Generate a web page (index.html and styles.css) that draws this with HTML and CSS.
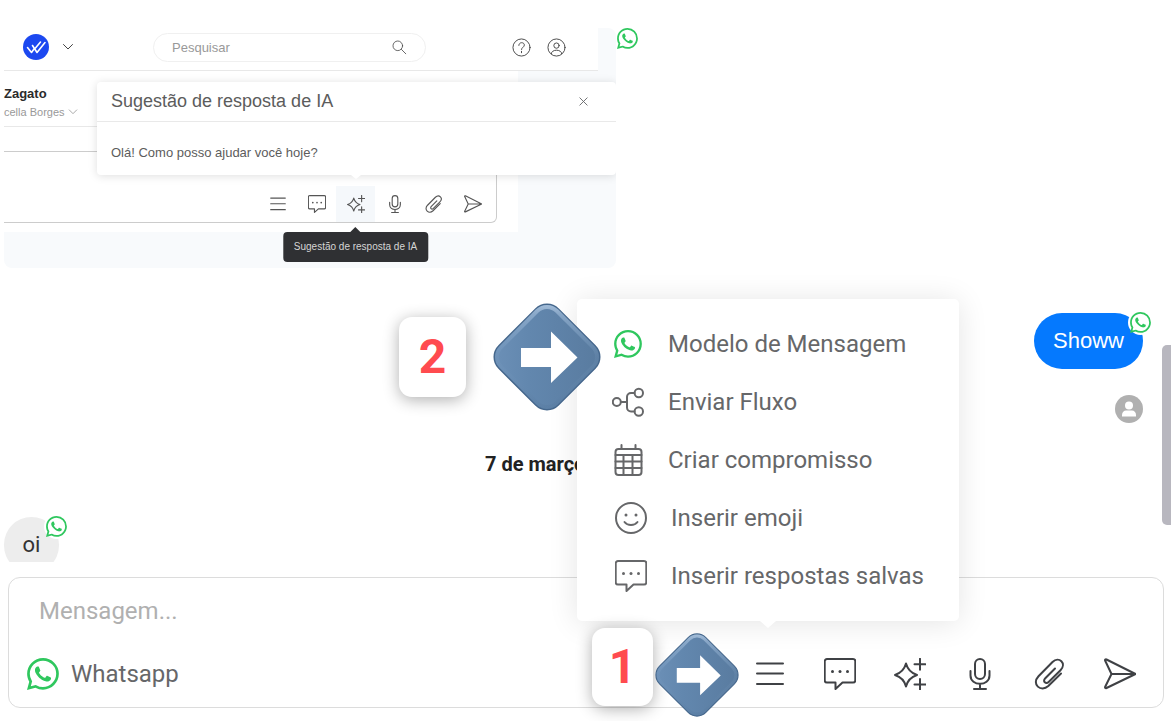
FILE: index.html
```html
<!DOCTYPE html>
<html lang="pt-BR">
<head>
<meta charset="utf-8">
<title>Conversa</title>
<meta name="viewport" content="width=device-width, initial-scale=1">
<link rel="stylesheet" href="styles.css">
</head>
<body>
<svg class="sprite" aria-hidden="true">
  <symbol id="i-whatsapp" viewBox="0 0 16 16"><path fill="currentColor" d="M13.601 2.326A7.854 7.854 0 0 0 7.994 0C3.627 0 .068 3.558.064 7.926c0 1.399.366 2.76 1.057 3.965L0 16l4.204-1.102a7.933 7.933 0 0 0 3.79.965h.004c4.368 0 7.926-3.558 7.93-7.93A7.898 7.898 0 0 0 13.6 2.326zM7.994 14.521a6.573 6.573 0 0 1-3.356-.92l-.24-.144-2.494.654.666-2.433-.156-.251a6.56 6.56 0 0 1-1.007-3.505c0-3.626 2.957-6.584 6.591-6.584a6.56 6.56 0 0 1 4.66 1.931 6.557 6.557 0 0 1 1.928 4.66c-.004 3.639-2.961 6.592-6.592 6.592zm3.615-4.934c-.197-.099-1.17-.578-1.353-.646-.182-.065-.315-.099-.445.099-.133.197-.513.646-.627.775-.114.133-.232.148-.43.05-.197-.1-.836-.308-1.592-.985-.59-.525-.985-1.175-1.103-1.372-.114-.198-.011-.304.088-.403.087-.088.197-.232.296-.346.1-.114.133-.198.198-.33.065-.134.034-.248-.015-.347-.05-.099-.445-1.076-.612-1.47-.16-.389-.323-.335-.445-.34-.114-.007-.247-.007-.38-.007a.729.729 0 0 0-.529.247c-.182.198-.691.677-.691 1.654 0 .977.71 1.916.81 2.049.098.133 1.394 2.132 3.383 2.992.47.205.84.326 1.129.418.475.152.904.129 1.246.08.38-.058 1.171-.48 1.338-.943.164-.464.164-.86.114-.943-.049-.084-.182-.133-.38-.232z"/></symbol>
  <symbol id="i-menu" viewBox="0 0 32 32"><path d="M3 5.500h26M3 15.500h26M3 26h26"/></symbol>
  <symbol id="i-bubble" viewBox="0 0 32 32"><path d="M3 1h26a2.300 2.300 0 0 1 2.300 2.300v19a2.300 2.300 0 0 1-2.300 2.300H18.500L11.500 31v-6.400H3a2.300 2.300 0 0 1-2.300-2.300v-19A2.300 2.300 0 0 1 3 1z"/><g class="dots"><circle cx="8.500" cy="13.500" r="1.500"/><circle cx="16" cy="13.500" r="1.500"/><circle cx="23.500" cy="13.500" r="1.500"/></g></symbol>
  <symbol id="i-spark" viewBox="0 0 32 32"><path d="M12 5.500C13.500 11 17 15 23 17c-6 2-9.500 5.500-11 11.500C10.500 22.500 7 19 1 17c6-2 9.500-6 11-11.500zM26 .8v11M20.500 6.300h11M26 21v11M20.500 26.500h11"/></symbol>
  <symbol id="i-mic" viewBox="0 0 32 32"><rect x="11" y="1" width="10" height="20" rx="5"/><path d="M6.500 13v4.500c0 11 19 11 19 0V13M16 26v5M10 31h12"/></symbol>
  <symbol id="i-clip" viewBox="0 0 32 32"><path d="M21 10.500 11.300 20.200c-3.200 3.200.6 6.500 3.600 3.600L26.500 12.200C33 5.500 25 -2 18.500 4L4.500 18.200c-7.500 8 2.500 16.500 9.800 9.800L27 15.500"/></symbol>
  <symbol id="i-send" viewBox="0 0 32 32"><path d="M1.200 2.800c-.5-1.100.3-1.700 1.300-1.300L31.500 16 2.500 30c-1 .4-1.800-.2-1.300-1.300L7.500 16zM7.500 16h24"/></symbol>
  <symbol id="i-flow" viewBox="0 0 32 32"><circle cx="4.800" cy="16" r="4"/><circle cx="26.800" cy="7" r="4.200"/><circle cx="26.800" cy="25.500" r="4.200"/><path d="M9 16h6M22.500 7H19a4 4 0 0 0-4 4v10.500a4 4 0 0 0 4 4h3.500"/></symbol>
  <symbol id="i-calendar" viewBox="0 0 32 32"><rect x="3.500" y="5" width="26" height="26" rx="3"/><path d="M3.500 11h26M3.500 17.500h26M3.500 24h26M11.500 11v20M20.500 11v20M9.500 1v4M23.500 1v4"/></symbol>
  <symbol id="i-smile" viewBox="0 0 32 32"><circle cx="16" cy="16" r="15"/><path d="M9.500 20c3 4 10 4 13 0"/><g class="dots"><circle cx="11" cy="13" r="1.500"/><circle cx="21" cy="13" r="1.500"/></g></symbol>
  <symbol id="i-chevron" viewBox="0 0 12 12"><path d="M1.500 3.500 6 8l4.500-4.500"/></symbol>
  <symbol id="i-search" viewBox="0 0 20 20"><circle cx="8.500" cy="8.500" r="6"/><path d="m13 13 5.500 5.500"/></symbol>
  <symbol id="i-help" viewBox="0 0 20 20"><circle cx="10" cy="10" r="9"/><path d="M7.200 7.800c0-4 5.800-3.600 5.800-.4 0 2.200-3 2.400-3 4.700M10 14v1.500"/></symbol>
  <symbol id="i-user" viewBox="0 0 20 20"><circle cx="10" cy="10" r="9"/><circle cx="10" cy="8" r="2.800"/><path d="M4.500 16.500c0-5 11-5 11 0"/></symbol>
  <symbol id="i-close" viewBox="0 0 12 12"><path d="m2 2 8 8M10 2l-8 8"/></symbol>
  <symbol id="i-arrow" viewBox="0 0 108 108">
    <rect x="12" y="12" width="84" height="84" rx="16" transform="rotate(45 54 54)" fill="url(#face)" stroke="#45678c" stroke-width="1.500"/>
    <rect x="14.500" y="14.500" width="79" height="79" rx="14" transform="rotate(45 54 54)" fill="none" stroke="url(#shine)" stroke-width="4"/>
    <path fill="#fff" d="M28 45h30V28.500L84.500 54.500 58 80V64H28z"/>
  </symbol>
  <defs>
    <linearGradient id="face" x1="0" y1="1" x2="1" y2="0"><stop offset="0" stop-color="#6d91b8"/><stop offset=".35" stop-color="#6287ae"/><stop offset="1" stop-color="#587a9e"/></linearGradient>
    <linearGradient id="shine" x1="0" y1="0" x2="1" y2="1"><stop offset="0" stop-color="#bdd3ea" stop-opacity=".85"/><stop offset=".12" stop-color="#a9c3df" stop-opacity=".55"/><stop offset=".5" stop-color="#8fb0d2" stop-opacity=".1"/><stop offset="1" stop-color="#45678c" stop-opacity=".2"/></linearGradient>
  </defs>
</svg>

<main class="page">
  <section class="chat" aria-label="Mensagens">
    <div class="attachment">
      <div class="panel">
        <header class="nav">
          <button class="brand" aria-label="Conta">
            <svg class="logo" viewBox="0 0 26 26"><circle cx="13" cy="13" r="13" fill="#1c48f0"/><path d="m4.500 13.500 4 5L11 15M9.500 11.500l4.500 7 8-10M12.500 14l5-6" fill="none" stroke="#fff" stroke-width="1.600" stroke-linecap="round" stroke-linejoin="round"/></svg>
            <svg class="icon chevron"><use href="#i-chevron"/></svg>
          </button>
          <label class="search"><input type="search" placeholder="Pesquisar" aria-label="Pesquisar"><svg class="icon lens"><use href="#i-search"/></svg></label>
          <div class="nav-icons">
            <button aria-label="Ajuda"><svg class="icon"><use href="#i-help"/></svg></button>
            <button aria-label="Perfil"><svg class="icon"><use href="#i-user"/></svg></button>
          </div>
        </header>
        <div class="thread">
          <div class="contact">
            <strong>Zagato</strong>
            <span>cella Borges <svg class="icon"><use href="#i-chevron"/></svg></span>
          </div>
          <div class="mini-composer">
            <button aria-label="Menu"><svg class="icon"><use href="#i-menu"/></svg></button>
            <button aria-label="Respostas"><svg class="icon"><use href="#i-bubble"/></svg></button>
            <button class="active" aria-label="IA"><svg class="icon"><use href="#i-spark"/></svg><span class="tooltip" role="tooltip">Sugestão de resposta de IA</span></button>
            <button aria-label="Áudio"><svg class="icon"><use href="#i-mic"/></svg></button>
            <button aria-label="Anexo"><svg class="icon"><use href="#i-clip"/></svg></button>
            <button aria-label="Enviar"><svg class="icon"><use href="#i-send"/></svg></button>
          </div>
        </div>
        <section class="suggestion" aria-labelledby="suggestion-title">
          <header><h2 id="suggestion-title">Sugestão de resposta de IA</h2><button aria-label="Fechar"><svg class="icon"><use href="#i-close"/></svg></button></header>
          <p>Olá! Como posso ajudar você hoje?</p>
        </section>
      </div>
      <svg class="wa wa-small"><use href="#i-whatsapp"/></svg>
    </div>
    <div class="sent">
      <div class="bubble bubble-out">Showw<span class="badge"><svg class="wa"><use href="#i-whatsapp"/></svg></span></div>
      <svg class="avatar" viewBox="0 0 28 28"><circle cx="14" cy="14" r="14" fill="#b0b0b0"/><circle cx="14" cy="10.500" r="4" fill="#fff"/><path fill="#fff" d="M7 21.500v-1.500c0-3 2-4.500 4-4.500h6c2 0 4 1.500 4 4.500v1.500z"/></svg>
    </div>
    <p class="date">7 de março</p>
    <div class="bubble bubble-in">oi<span class="badge"><svg class="wa"><use href="#i-whatsapp"/></svg></span></div>
  </section>

  <form class="composer">
    <input class="message" type="text" placeholder="Mensagem..." aria-label="Mensagem">
    <div class="composer-row">
      <button type="button" class="channel"><svg class="wa"><use href="#i-whatsapp"/></svg>Whatsapp</button>
      <div class="tools">
        <button type="button" aria-label="Menu"><svg class="icon"><use href="#i-menu"/></svg></button>
        <button type="button" aria-label="Respostas salvas"><svg class="icon"><use href="#i-bubble"/></svg></button>
        <button type="button" aria-label="Sugestão de IA"><svg class="icon"><use href="#i-spark"/></svg></button>
        <button type="button" aria-label="Gravar áudio"><svg class="icon"><use href="#i-mic"/></svg></button>
        <button type="button" aria-label="Anexar"><svg class="icon"><use href="#i-clip"/></svg></button>
        <button type="button" aria-label="Enviar"><svg class="icon"><use href="#i-send"/></svg></button>
      </div>
    </div>
  </form>

  <nav class="menu" aria-label="Ações">
    <button><svg class="wa"><use href="#i-whatsapp"/></svg>Modelo de Mensagem</button>
    <button><svg class="icon"><use href="#i-flow"/></svg>Enviar Fluxo</button>
    <button><svg class="icon"><use href="#i-calendar"/></svg>Criar compromisso</button>
    <button class="inset"><svg class="icon"><use href="#i-smile"/></svg>Inserir emoji</button>
    <button class="inset"><svg class="icon"><use href="#i-bubble"/></svg>Inserir respostas salvas</button>
  </nav>

  <div class="scroll-thumb"></div>
  <div class="step step-two">2</div>
  <svg class="pointer pointer-two"><use href="#i-arrow"/></svg>
  <div class="step step-one">1</div>
  <svg class="pointer pointer-one"><use href="#i-arrow"/></svg>
</main>
</body>
</html>
```

FILE: styles.css
```css
* { box-sizing: border-box; }

body {
  margin: 0;
  background: #fff;
  color: #666769;
  font-family: Roboto, "Liberation Sans", sans-serif;
  font-size: 24px;
}

button {
  padding: 0;
  border: 0;
  background: none;
  color: inherit;
  font: inherit;
  cursor: pointer;
}

.sprite { position: absolute; width: 0; height: 0; }

.icon {
  display: block;
  flex: none;
  overflow: visible;
  fill: none;
  stroke: currentColor;
  stroke-width: 2;
  stroke-linecap: round;
  stroke-linejoin: round;
}

.dots { fill: currentColor; stroke: none; }

.wa { display: block; flex: none; color: #2fc75e; }

.page {
  position: relative;
  display: flex;
  flex-direction: column;
  min-height: 100vh;
  overflow: hidden;
}

/* Conversation */
.chat {
  display: flex;
  flex: 1 1 0;
  flex-direction: column;
  margin-bottom: 15px;
  padding: 28px 28px 0 4px;
  overflow: hidden;
}

.attachment { display: flex; gap: 1px; }
.wa-small { width: 21px; height: 21px; }

.panel {
  position: relative;
  flex: none;
  width: 612px;
  height: 240px;
  border-radius: 8px;
  background: #f8fafc;
  font-family: "Liberation Sans", Arial, sans-serif;
  font-size: 12px;
}

.nav {
  display: flex;
  align-items: center;
  width: 594px;
  height: 43px;
  padding: 0 32px 4px 19px;
  border-bottom: 1px solid #e8e8e8;
  background: #fff;
  color: #444;
}

.brand { display: flex; align-items: center; gap: 13px; width: 130px; }
.logo { width: 26px; height: 26px; }
.chevron { width: 12px; height: 12px; stroke-width: 1; }

.search {
  display: flex;
  align-items: center;
  width: 273px;
  height: 29px;
  padding: 0 18px;
  border: 1px solid #f0f0f0;
  border-radius: 15px;
}

.search input {
  flex: 1;
  min-width: 0;
  padding: 0;
  border: 0;
  background: none;
  font: 13px "Liberation Sans", Arial, sans-serif;
}

.search input::placeholder { color: #999; opacity: 1; }
.lens { width: 16px; height: 16px; stroke-width: 1; }
.nav-icons { display: flex; gap: 16px; margin-left: auto; }
.nav-icons .icon { width: 19px; height: 19px; stroke-width: 1; }

.thread { width: 514px; height: 161px; background: #fff; }

.contact {
  display: flex;
  flex-direction: column;
  gap: 4px;
  height: 56px;
  padding-top: 16px;
  border-bottom: 1px solid #e8e8e8;
  line-height: 14px;
}

.contact strong { color: #2b2b2b; font-size: 13px; }
.contact span { display: flex; align-items: center; gap: 3px; color: #999; font-size: 11px; }
.contact .icon { width: 10px; height: 10px; stroke-width: 1; }

.mini-composer {
  display: flex;
  justify-content: flex-end;
  align-items: flex-end;
  width: 493px;
  height: 72px;
  margin-top: 24px;
  padding-right: 4px;
  border: solid #ccc;
  border-width: 1px 1px 1px 0;
  border-radius: 0 6px 6px 0;
  color: #555;
}

.mini-composer button {
  position: relative;
  display: grid;
  place-items: center;
  width: 39px;
  height: 36px;
}

.mini-composer .icon { width: 18px; height: 18px; }
.mini-composer .active { background: #f5f8fb; }

.tooltip {
  position: absolute;
  top: 46px;
  left: 50%;
  padding: 0 11px;
  border-radius: 4px;
  background: #2f3033;
  color: #d5d5d5;
  font-size: 10px;
  line-height: 30px;
  white-space: nowrap;
  transform: translateX(-50%);
}

.tooltip::before {
  content: "";
  position: absolute;
  top: -5px;
  left: 50%;
  margin-left: -5px;
  border: solid transparent;
  border-width: 0 5px 5px;
  border-bottom-color: #2f3033;
}

.suggestion {
  position: absolute;
  top: 54px;
  right: 0;
  width: 519px;
  height: 93px;
  border-radius: 4px;
  background: #fff;
  box-shadow: 0 1px 10px #0002;
  clip-path: inset(-12px 0 -12px -12px);
}

.suggestion::after {
  content: "";
  position: absolute;
  top: 93px;
  left: 254px;
  border: solid transparent;
  border-width: 4px 5px 0;
  border-top-color: #fff;
}

.suggestion header {
  display: flex;
  justify-content: space-between;
  align-items: center;
  height: 40px;
  padding: 0 27px 0 14px;
  border-bottom: 1px solid #e9e9e9;
}

.suggestion h2 { margin: 0; color: #5c5c5c; font-size: 18px; font-weight: 400; }
.suggestion header .icon { width: 11px; height: 11px; stroke-width: 1; }
.suggestion p { margin: 0; padding: 23px 14px; color: #5c5c5c; font-size: 13px; line-height: 15px; }

.sent {
  display: flex;
  flex-direction: column;
  align-items: flex-end;
  gap: 26px;
  margin-top: 45px;
}

.bubble {
  position: relative;
  flex: none;
  border-radius: 28px;
  line-height: 56px;
}

.bubble-out {
  padding: 0 19px;
  background: #0579fe;
  color: #fff;
  font-family: "Liberation Sans", Arial, sans-serif;
  font-size: 22px;
}

.bubble-in {
  align-self: flex-start;
  width: 55px;
  margin-top: 38px;
  background: #ededed;
  color: #333;
  font-size: 22px;
  text-align: center;
}

.badge {
  position: absolute;
  top: -3px;
  right: -10px;
  padding: 2px;
  border-radius: 50%;
  background: #fff;
}

.badge .wa { width: 21px; height: 21px; }

.avatar { width: 28px; height: 28px; }

.date {
  margin: 26px 0 0 481px;
  color: #222;
  font-size: 20px;
  font-weight: 700;
  line-height: 30px;
}

/* Composer */
.composer {
  margin: 0 7px 13px 8px;
  padding-bottom: 3px;
  border: 1px solid #dcdcdc;
  border-radius: 12px;
}

.message {
  display: block;
  width: 100%;
  height: 66px;
  padding: 0 30px;
  border: 0;
  background: none;
  font: inherit;
}

.message::placeholder { color: #b0b0b0; opacity: 1; }

.composer-row {
  display: flex;
  justify-content: space-between;
  align-items: center;
  height: 60px;
  padding: 0 8px 0 18px;
}

.channel { display: flex; align-items: center; gap: 12px; }
.channel .wa { width: 32px; height: 32px; }
.tools { display: flex; color: #3f4145; }
.tools button { display: grid; place-items: center; width: 70px; height: 60px; }
.tools .icon { width: 32px; height: 32px; }

/* Floating action menu */
.menu {
  position: absolute;
  right: 212px;
  bottom: 100px;
  width: 382px;
  padding: 16px 0;
  border-radius: 5px;
  background: #fff;
  box-shadow: 0 2px 30px #0000001c;
}

.menu::after {
  content: "";
  position: absolute;
  top: 100%;
  left: 50%;
  margin-left: -8px;
  border: solid transparent;
  border-width: 7px 8px 0;
  border-top-color: #fff;
}

.menu button {
  display: flex;
  align-items: center;
  gap: 24px;
  width: 100%;
  height: 58px;
  padding-left: 35px;
}

.menu .inset { padding-left: 38px; }
.menu .icon { width: 32px; height: 32px; }
.menu .wa { width: 28px; height: 28px; margin: 0 2px; }

.scroll-thumb {
  position: absolute;
  top: 345px;
  right: 0;
  width: 9px;
  height: 180px;
  border-radius: 5px 0 0 5px;
  background: #b8b7bf;
}

/* Numbered callouts */
.step {
  position: absolute;
  border-radius: 13px;
  background: #fff;
  box-shadow: 0 3px 16px #00000050;
  color: #ff4b4f;
  font-family: Roboto, "Liberation Sans", sans-serif;
  font-size: 48px;
  font-weight: 700;
  line-height: 80px;
  text-align: center;
}

.step-two { top: 317px; left: 399px; width: 67px; }
.step-one { bottom: 15px; left: 592px; width: 61px; line-height: 78px; }
.pointer { position: absolute; }
.pointer-two { top: 303px; left: 493px; width: 108px; height: 108px; }
.pointer-one { bottom: 4px; left: 655px; width: 84px; height: 84px; }
```
